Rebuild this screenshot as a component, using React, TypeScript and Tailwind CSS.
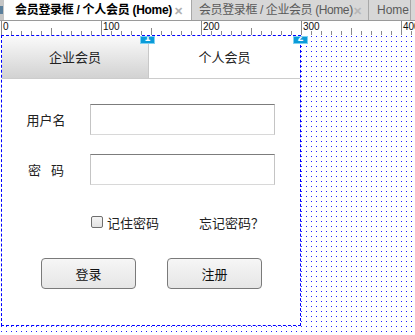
import React from "react";

const cjk = "font-['Noto_Sans_CJK_SC',sans-serif]";

function Ruler() {
  const ticks: React.ReactNode[] = [];
  for (let x = 0; x <= 420; x += 10) {
    const px = x + 1.5;
    if (x % 100 === 0) {
      ticks.push(<line key={x} x1={px} x2={px} y1={0} y2={14} stroke="#8a8a8a" strokeWidth={1} />);
      ticks.push(
        <text key={"t" + x} x={x + 3} y={9} fontSize={10} fill="#111" fontFamily="Liberation Sans, Arial, sans-serif">
          {x}
        </text>
      );
    } else if (x % 50 === 0) {
      ticks.push(<line key={x} x1={px} x2={px} y1={7} y2={14} stroke="#8a8a8a" strokeWidth={1} />);
    } else {
      ticks.push(<line key={x} x1={px} x2={px} y1={10} y2={14} stroke="#8a8a8a" strokeWidth={1} />);
    }
  }
  return (
    <svg width={415} height={14} className="block">
      {ticks}
    </svg>
  );
}

function Marker({ n }: { n: string }) {
  return (
    <div className="w-[15px] h-[8px] bg-[#0b9bd8] border border-[#7fd1f2] overflow-hidden flex justify-center">
      <span className="text-white text-[10px] leading-[10px] font-bold -mt-[4px] font-['Liberation_Sans',sans-serif]">{n}</span>
    </div>
  );
}

export default function App() {
  return (
    <div className="w-[415px] h-[335px] overflow-hidden bg-white flex flex-col">
      {/* document tab bar */}
      <div className="h-[20px] flex bg-[#c6c6c6] shrink-0">
        <div className="w-[4px] flex items-center">
          <div className="w-[3px] h-[8px] bg-[#5b7f9c]" />
        </div>
        <div className="w-[187px] bg-white flex items-center pl-[11px] pr-[8px] justify-between">
          <span className={`text-[12px] leading-none font-bold text-black font-['Liberation_Sans','Noto_Sans_CJK_SC',sans-serif] tracking-[-0.3px]`}>
            会员登录框 / 个人会员 (Home)
          </span>
          <span className="text-[11px] leading-none text-[#b0b0b0] font-bold">✕</span>
        </div>
        <div className="w-[1px] bg-[#a8a8a8]" />
        <div className="w-[176px] bg-[#d7d7d7] flex items-center pl-[7px] pr-[6px] justify-between">
          <span className={`text-[12px] leading-none text-[#5a5a5a] font-['Liberation_Sans','Noto_Sans_CJK_SC',sans-serif] tracking-[-0.4px]`}>
            会员登录框 / 企业会员 (Home)
          </span>
          <span className="text-[11px] leading-none text-[#b8b8b8] font-bold">✕</span>
        </div>
        <div className="w-[1px] bg-[#a8a8a8]" />
        <div className="w-[41px] bg-[#d7d7d7] flex items-center pl-[8px]">
          <span className="text-[12px] leading-none text-[#5a5a5a] font-['Liberation_Sans',sans-serif]">Home</span>
        </div>
        <div className="w-[1px] bg-[#a8a8a8]" />
        <div className="flex-1 bg-[#d7d7d7]" />
      </div>

      {/* ruler */}
      <div className="h-[15px] border-t border-[#9a9a9a] bg-white shrink-0">
        <Ruler />
      </div>

      {/* canvas */}
      <div className="relative flex-1 flex items-start">
        <svg className="absolute inset-0" width={415} height={300}>
          <defs>
            <pattern id="dots" x={1} y={1} width={5} height={5} patternUnits="userSpaceOnUse">
              <rect x={0} y={0} width={1} height={1} fill="#2020ff" />
            </pattern>
          </defs>
          <rect x={0} y={0} width={415} height={300} fill="url(#dots)" />
        </svg>

        <div className="relative ml-[1px] w-[300px] h-[291px] border border-dashed border-[#0000ff] bg-white flex flex-col">
          {/* tabs */}
          <div className="flex h-[43px] border-b border-[#cccccc]">
            <div className={`w-[147px] bg-gradient-to-b from-[#fafafa] to-[#d2d2d2] border-r border-[#c8c8c8] flex items-center justify-center text-[13px] text-[#222] ${cjk}`}>
              企业会员
            </div>
            <div className={`flex-1 bg-white flex items-center justify-center text-[13px] text-[#222] ${cjk}`}>
              个人会员
            </div>
          </div>

          {/* username */}
          <div className="flex items-center mt-[25px]">
            <div className={`ml-[18px] w-[52px] text-center text-[13px] leading-none text-[#222] ${cjk}`}>用户名</div>
            <div className="ml-[18px] w-[185px] h-[31px] border border-[#c4c4c4] border-t-[#7c7c7c] border-b-[#d8d8d8] bg-white" />
          </div>

          {/* password */}
          <div className="flex items-center mt-[19px]">
            <div className={`ml-[18px] w-[52px] flex justify-center gap-[10px] text-[13px] leading-none text-[#222] ${cjk}`}>
              <span>密</span>
              <span>码</span>
            </div>
            <div className="ml-[18px] w-[185px] h-[31px] border border-[#c4c4c4] border-t-[#7c7c7c] border-b-[#d8d8d8] bg-white" />
          </div>

          {/* remember / forgot */}
          <div className="flex items-center h-[20px] mt-[27px]">
            <div className="ml-[89px] w-[12px] h-[12px] rounded-[2px] border border-[#6e6e6e] bg-gradient-to-b from-[#f4f4f4] to-[#e2e2e2]" />
            <span className={`ml-[4px] text-[13px] leading-none text-[#222] ${cjk}`}>记住密码</span>
            <span className={`ml-[40px] text-[13px] leading-none text-[#222] ${cjk}`}>忘记密码？</span>
          </div>

          {/* buttons */}
          <div className="flex mt-[26px]">
            <button className={`ml-[39px] w-[95px] h-[31px] rounded-[4px] border border-[#7a7a7a] bg-gradient-to-b from-[#f6f6f6] to-[#e6e6e6] text-[13px] text-[#111] ${cjk}`}>
              登录
            </button>
            <button className={`ml-[31px] w-[95px] h-[31px] rounded-[4px] border border-[#7a7a7a] bg-gradient-to-b from-[#f6f6f6] to-[#e6e6e6] text-[13px] text-[#111] ${cjk}`}>
              注册
            </button>
          </div>

          {/* markers */}
          <div className="absolute top-0 left-[138px]">
            <Marker n="1" />
          </div>
          <div className="absolute top-0 left-[291px]">
            <Marker n="2" />
          </div>
        </div>
      </div>
    </div>
  );
}
